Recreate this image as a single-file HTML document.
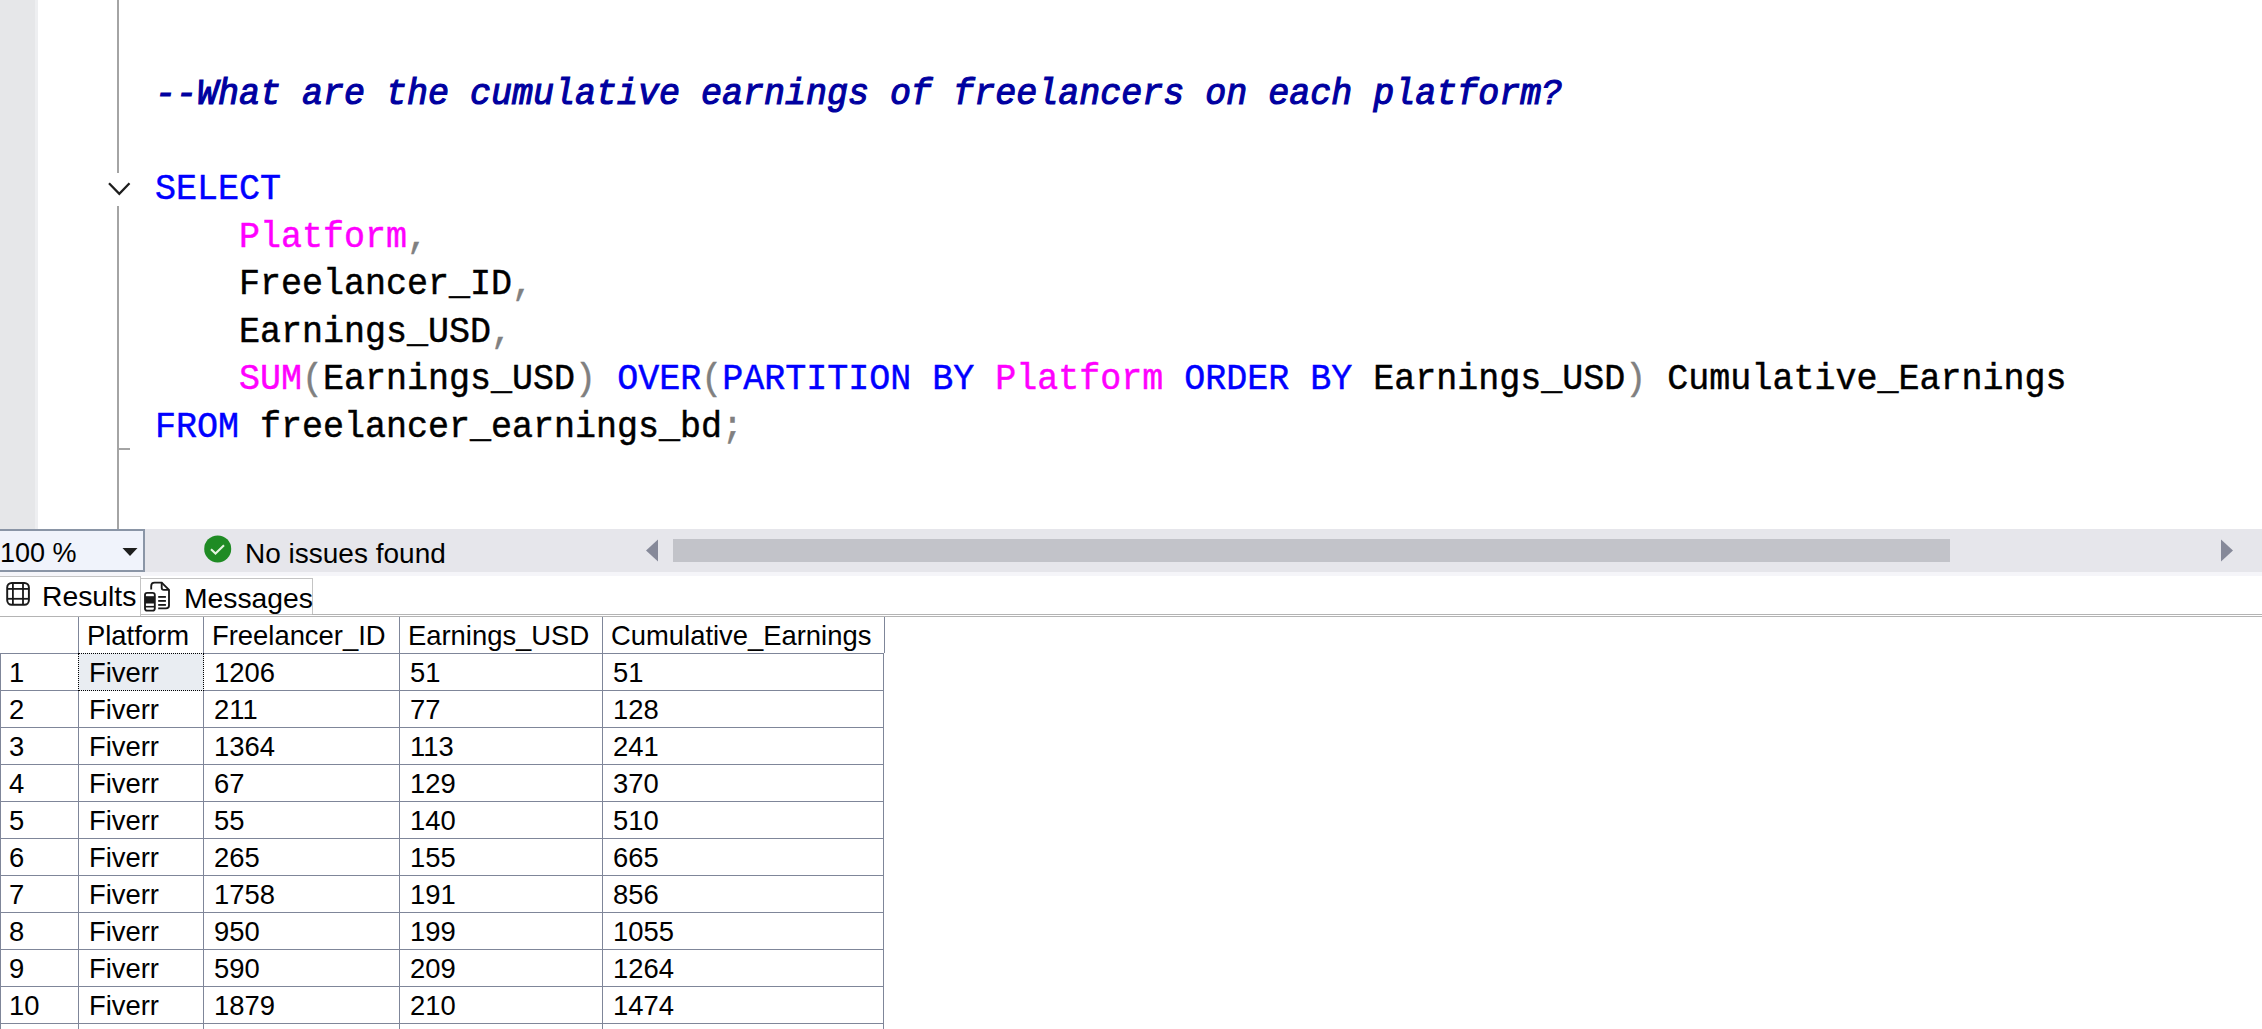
<!DOCTYPE html>
<html><head><meta charset="utf-8">
<style>
html,body{margin:0;padding:0;}
body{width:2262px;height:1029px;overflow:hidden;background:#fff;position:relative;font-family:"Liberation Sans",sans-serif;}
.abs{position:absolute;}
#margin{left:0;top:0;width:35px;height:529px;background:#e6e7e9;}
#margin2{left:35px;top:0;width:3px;height:529px;background:#eeeff1;}
.vl{background:#a4a4a4;width:2px;left:117px;}
.code{font-family:"Liberation Mono",monospace;font-size:35px;white-space:pre;line-height:48px;height:48px;left:155px;color:#000;transform:scaleY(1.055);transform-origin:0 33px;-webkit-text-stroke:0.45px currentColor;}
.k{color:#0000ff}.f{color:#ff00ff}.p{color:#808080}
.cm{color:#0000a0;font-weight:normal;font-style:italic;-webkit-text-stroke:1.1px currentColor;}
#status{left:0;top:529px;width:2262px;height:43px;background:#e6e6eb;}
#zoom{left:0;top:529px;width:143px;height:39px;border:2px solid #8a95a6;border-left:none;background:#f0f3fb;}
.ui{font-family:"Liberation Sans",sans-serif;color:#000;white-space:pre;}
.grid{font-family:"Liberation Sans",sans-serif;font-size:27.4px;white-space:pre;}
.hl{background:#7f8699;height:1px;}
.vg{background:#7f8699;width:1px;}
</style></head><body>
<div class="abs" id="margin"></div>
<div class="abs" id="margin2"></div>
<div class="abs vl" style="top:0;height:173px"></div>
<div class="abs vl" style="top:206px;height:323px"></div>
<div class="abs" style="left:117px;top:448px;width:13px;height:2px;background:#a4a4a4"></div>
<svg class="abs" style="left:100px;top:175px" width="40" height="30"><polyline points="9,8.3 19.3,18.8 29.5,8.3" fill="none" stroke="#1e1e1e" stroke-width="2.3"/></svg>

<div class="abs code" style="top:71px"><span class="cm">--What are the cumulative earnings of freelancers on each platform?</span></div>
<div class="abs code" style="top:166px"><span class="k">SELECT</span></div>
<div class="abs code" style="top:214px">    <span class="f">Platform</span><span class="p">,</span></div>
<div class="abs code" style="top:261px">    Freelancer_ID<span class="p">,</span></div>
<div class="abs code" style="top:309px">    Earnings_USD<span class="p">,</span></div>
<div class="abs code" style="top:356px">    <span class="f">SUM</span><span class="p">(</span>Earnings_USD<span class="p">)</span> <span class="k">OVER</span><span class="p">(</span><span class="k">PARTITION BY</span> <span class="f">Platform</span> <span class="k">ORDER BY</span> Earnings_USD<span class="p">)</span> Cumulative_Earnings</div>
<div class="abs code" style="top:404px"><span class="k">FROM</span> freelancer_earnings_bd<span class="p">;</span></div>

<div class="abs" id="status"></div>
<div class="abs" id="zoom"></div>
<div class="abs" style="left:0;top:572px;width:2262px;height:4px;background:#f5f5f9"></div>
<div class="abs ui" style="left:0px;top:538px;font-size:27px;line-height:30px">100 %</div>
<svg class="abs" style="left:122px;top:547px" width="17" height="10"><polygon points="0.5,1 15.5,1 8,9" fill="#1e1e1e"/></svg>
<svg class="abs" style="left:203px;top:535px" width="30" height="30"><circle cx="14.7" cy="13.9" r="13.5" fill="#1f8b24"/><polyline points="8,14.2 12.5,18.6 21,10.3" fill="none" stroke="#e4f4e0" stroke-width="2.1"/></svg>
<div class="abs ui" style="left:245px;top:537.5px;font-size:28px;line-height:32px">No issues found</div>
<svg class="abs" style="left:645px;top:539px" width="14" height="23"><polygon points="13,0.5 13,22.5 1,11.5" fill="#868999"/></svg>
<div class="abs" style="left:673px;top:539px;width:1277px;height:23px;background:#c2c3c9"></div>
<svg class="abs" style="left:2220px;top:539px" width="14" height="23"><polygon points="1,0.5 1,22.5 13,11.5" fill="#868999"/></svg>

<!-- tabs -->
<div class="abs" style="left:0;top:576px;width:140px;height:40px;border-top:1px solid #c4c4c4;border-right:1px solid #c4c4c4;background:#fff"></div>
<div class="abs" style="left:141px;top:578px;width:171px;height:35px;border:1px solid #c4c4c4;border-left:none;background:#fff"></div>
<div class="abs" style="left:312px;top:614px;width:1950px;height:1px;background:#b4b4b4"></div>
<div class="abs" style="left:0;top:616px;width:2262px;height:1px;background:#b4b4b4"></div>
<svg class="abs" style="left:0;top:576px" width="40" height="40"><rect x="7.2" y="6.9" width="21.7" height="21.9" rx="4.5" fill="none" stroke="#1a1a1a" stroke-width="1.95"/><line x1="12.9" y1="7" x2="12.9" y2="29" stroke="#1a1a1a" stroke-width="1.8"/><line x1="23" y1="7" x2="23" y2="29" stroke="#1a1a1a" stroke-width="1.8"/><line x1="7" y1="12.9" x2="29" y2="12.9" stroke="#1a1a1a" stroke-width="1.8"/><line x1="7" y1="22.8" x2="29" y2="22.8" stroke="#1a1a1a" stroke-width="1.8"/></svg>
<div class="abs ui" style="left:42px;top:580px;font-size:28.3px;line-height:32px">Results</div>
<svg class="abs" style="left:140px;top:578px" width="36" height="36"><path d="M11.2,11.5 V8 Q11.2,4.6 14.6,4.6 H21.7 L29,11.9 V27.5 Q29,30.4 26,30.4 H18.2" fill="none" stroke="#1a1a1a" stroke-width="1.85"/><path d="M21.7,4.6 V9.8 Q21.7,11.9 23.8,11.9 H29" fill="none" stroke="#1a1a1a" stroke-width="1.85"/><line x1="18.2" y1="18.9" x2="25.9" y2="18.9" stroke="#1a1a1a" stroke-width="1.85"/><line x1="18.2" y1="22.9" x2="25.9" y2="22.9" stroke="#1a1a1a" stroke-width="1.85"/><line x1="18.2" y1="26.9" x2="25.9" y2="26.9" stroke="#1a1a1a" stroke-width="1.85"/><rect x="5" y="14.8" width="9.8" height="17.8" rx="2.2" fill="#fff" stroke="#1a1a1a" stroke-width="1.85"/><rect x="5" y="18.2" width="9.8" height="7.3" fill="#1a1a1a"/><line x1="5" y1="28.7" x2="14.8" y2="28.7" stroke="#1a1a1a" stroke-width="1.6"/></svg>
<div class="abs ui" style="left:184px;top:582px;font-size:28.3px;line-height:32px">Messages</div>

<!-- grid -->
<div id="gridwrap">
<div class="abs vg" style="left:78px;top:617px;height:412px"></div>
<div class="abs vg" style="left:203px;top:617px;height:412px"></div>
<div class="abs vg" style="left:399px;top:617px;height:412px"></div>
<div class="abs vg" style="left:602px;top:617px;height:412px"></div>
<div class="abs vg" style="left:884px;top:617px;height:36px"></div>
<div class="abs vg" style="left:883px;top:653px;height:376px"></div>
<div class="abs vg" style="left:0px;top:653px;height:376px"></div>
<div class="abs hl" style="left:0;top:653px;width:884px"></div>
<div class="abs hl" style="left:0;top:690px;width:884px"></div>
<div class="abs hl" style="left:0;top:727px;width:884px"></div>
<div class="abs hl" style="left:0;top:764px;width:884px"></div>
<div class="abs hl" style="left:0;top:801px;width:884px"></div>
<div class="abs hl" style="left:0;top:838px;width:884px"></div>
<div class="abs hl" style="left:0;top:875px;width:884px"></div>
<div class="abs hl" style="left:0;top:912px;width:884px"></div>
<div class="abs hl" style="left:0;top:949px;width:884px"></div>
<div class="abs hl" style="left:0;top:986px;width:884px"></div>
<div class="abs hl" style="left:0;top:1023px;width:884px"></div>
<div class="abs" style="left:78px;top:653px;width:124px;height:36px;background:#e9edf2;border:1px dotted #000"></div>
<div class="abs grid" style="left:87px;top:620px;line-height:32px">Platform</div>
<div class="abs grid" style="left:212px;top:620px;line-height:32px">Freelancer_ID</div>
<div class="abs grid" style="left:408px;top:620px;line-height:32px">Earnings_USD</div>
<div class="abs grid" style="left:611px;top:620px;line-height:32px">Cumulative_Earnings</div>
<div class="abs grid" style="left:9px;top:657px;line-height:32px">1</div>
<div class="abs grid" style="left:89px;top:657px;line-height:32px">Fiverr</div>
<div class="abs grid" style="left:214px;top:657px;line-height:32px">1206</div>
<div class="abs grid" style="left:410px;top:657px;line-height:32px">51</div>
<div class="abs grid" style="left:613px;top:657px;line-height:32px">51</div>
<div class="abs grid" style="left:9px;top:694px;line-height:32px">2</div>
<div class="abs grid" style="left:89px;top:694px;line-height:32px">Fiverr</div>
<div class="abs grid" style="left:214px;top:694px;line-height:32px">211</div>
<div class="abs grid" style="left:410px;top:694px;line-height:32px">77</div>
<div class="abs grid" style="left:613px;top:694px;line-height:32px">128</div>
<div class="abs grid" style="left:9px;top:731px;line-height:32px">3</div>
<div class="abs grid" style="left:89px;top:731px;line-height:32px">Fiverr</div>
<div class="abs grid" style="left:214px;top:731px;line-height:32px">1364</div>
<div class="abs grid" style="left:410px;top:731px;line-height:32px">113</div>
<div class="abs grid" style="left:613px;top:731px;line-height:32px">241</div>
<div class="abs grid" style="left:9px;top:768px;line-height:32px">4</div>
<div class="abs grid" style="left:89px;top:768px;line-height:32px">Fiverr</div>
<div class="abs grid" style="left:214px;top:768px;line-height:32px">67</div>
<div class="abs grid" style="left:410px;top:768px;line-height:32px">129</div>
<div class="abs grid" style="left:613px;top:768px;line-height:32px">370</div>
<div class="abs grid" style="left:9px;top:805px;line-height:32px">5</div>
<div class="abs grid" style="left:89px;top:805px;line-height:32px">Fiverr</div>
<div class="abs grid" style="left:214px;top:805px;line-height:32px">55</div>
<div class="abs grid" style="left:410px;top:805px;line-height:32px">140</div>
<div class="abs grid" style="left:613px;top:805px;line-height:32px">510</div>
<div class="abs grid" style="left:9px;top:842px;line-height:32px">6</div>
<div class="abs grid" style="left:89px;top:842px;line-height:32px">Fiverr</div>
<div class="abs grid" style="left:214px;top:842px;line-height:32px">265</div>
<div class="abs grid" style="left:410px;top:842px;line-height:32px">155</div>
<div class="abs grid" style="left:613px;top:842px;line-height:32px">665</div>
<div class="abs grid" style="left:9px;top:879px;line-height:32px">7</div>
<div class="abs grid" style="left:89px;top:879px;line-height:32px">Fiverr</div>
<div class="abs grid" style="left:214px;top:879px;line-height:32px">1758</div>
<div class="abs grid" style="left:410px;top:879px;line-height:32px">191</div>
<div class="abs grid" style="left:613px;top:879px;line-height:32px">856</div>
<div class="abs grid" style="left:9px;top:916px;line-height:32px">8</div>
<div class="abs grid" style="left:89px;top:916px;line-height:32px">Fiverr</div>
<div class="abs grid" style="left:214px;top:916px;line-height:32px">950</div>
<div class="abs grid" style="left:410px;top:916px;line-height:32px">199</div>
<div class="abs grid" style="left:613px;top:916px;line-height:32px">1055</div>
<div class="abs grid" style="left:9px;top:953px;line-height:32px">9</div>
<div class="abs grid" style="left:89px;top:953px;line-height:32px">Fiverr</div>
<div class="abs grid" style="left:214px;top:953px;line-height:32px">590</div>
<div class="abs grid" style="left:410px;top:953px;line-height:32px">209</div>
<div class="abs grid" style="left:613px;top:953px;line-height:32px">1264</div>
<div class="abs grid" style="left:9px;top:990px;line-height:32px">10</div>
<div class="abs grid" style="left:89px;top:990px;line-height:32px">Fiverr</div>
<div class="abs grid" style="left:214px;top:990px;line-height:32px">1879</div>
<div class="abs grid" style="left:410px;top:990px;line-height:32px">210</div>
<div class="abs grid" style="left:613px;top:990px;line-height:32px">1474</div>
</div>
</body></html>
